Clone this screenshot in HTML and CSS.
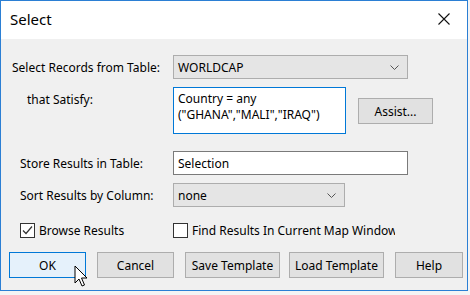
FILE: index.html
```html
<!DOCTYPE html>
<html lang="en">
<head>
    <meta charset="UTF-8">
    <title>Select</title>
    <link rel="stylesheet" href="styles.css">
</head>
<body>
    <div class="window">
        <div class="titlebar">
            <span class="title">Select</span>
            <svg class="close" width="12" height="12" viewBox="0 0 12 12">
                <path d="M0.5 0.5 L11.5 11.5 M11.5 0.5 L0.5 11.5" stroke="#111" stroke-width="1.1" fill="none"/>
            </svg>
        </div>
        <div class="content">
            <div class="row row-table">
                <label class="label l1">Select Records from Table:</label>
                <div class="combo wide">
                    <span>WORLDCAP</span>
                    <svg class="chev" width="9" height="5" viewBox="0 0 9 5"><path d="M0.5 0.5 L4.5 4.5 L8.5 0.5" stroke="#555" fill="none"/></svg>
                </div>
            </div>
            <div class="row row-where">
                <label class="label l2">that Satisfy:</label>
                <div class="textarea">Country = any<br>("GHANA","MALI","IRAQ")</div>
                <button class="btn assist">Assist...</button>
            </div>
            <div class="row row-store">
                <label class="label l3">Store Results in Table:</label>
                <div class="textbox">Selection</div>
            </div>
            <div class="row row-sort">
                <label class="label l3">Sort Results by Column:</label>
                <div class="combo narrow">
                    <span>none</span>
                    <svg class="chev" width="9" height="5" viewBox="0 0 9 5"><path d="M0.5 0.5 L4.5 4.5 L8.5 0.5" stroke="#555" fill="none"/></svg>
                </div>
            </div>
            <div class="row row-checks">
                <div class="check c1">
                    <span class="box">
                        <svg width="13" height="13" viewBox="0 0 13 13"><path d="M2 6.5 L5 9.5 L11 2.5" stroke="#333" stroke-width="1.2" fill="none"/></svg>
                    </span>
                    <span>Browse Results</span>
                </div>
                <div class="check c2">
                    <span class="box"></span>
                    <span class="clip">Find Results In Current Map Window</span>
                </div>
            </div>
            <div class="row buttons">
                <button class="btn ok">OK</button>
                <button class="btn cancel">Cancel</button>
                <button class="btn save">Save Template</button>
                <button class="btn load">Load Template</button>
                <button class="btn help">Help</button>
            </div>
        </div>
        <svg class="cursor" width="14" height="24" viewBox="0 0 14 24">
            <path d="M1 1 L1 18 L5 14 L8 21 L10.5 20 L7.5 13 L13 13 Z" fill="#fff" stroke="#000" stroke-width="1" stroke-linejoin="miter"/>
        </svg>
    </div>
</body>
</html>
```

FILE: styles.css
```css
body {
    margin: 0;
    background: #f4f4f4;
    font-family: "Noto Sans", "Open Sans", sans-serif;
    font-size: 12px;
    color: #000;
}
.window {
    position: relative;
    width: 466px;
    height: 289px;
    border: 1px solid #2b7fd4;
    background: #f0f0f0;
}
.titlebar {
    height: 38px;
    background: #fff;
    display: flex;
    align-items: center;
    justify-content: space-between;
    padding: 0 17px 0 9px;
}
.title {
    font-size: 15px;
    margin-top: -2px;
}
.close {
    margin-top: -2px;
}
.content {
    padding-top: 16px;
}
.row {
    display: flex;
    align-items: center;
}
.label {
    width: 172px;
    box-sizing: border-box;
}
.l1 { padding-left: 11px; }
.l2 { padding-left: 26px; }
.l3 { padding-left: 19px; }
.combo {
    height: 24px;
    box-sizing: border-box;
    border: 1px solid #adadad;
    background: #e5e5e5;
    display: flex;
    align-items: center;
    justify-content: space-between;
    padding: 0 8px 0 4px;
}
.combo.wide { width: 235px; }
.combo.narrow { width: 172px; }
.row-where {
    margin-top: 8px;
    align-items: flex-start;
}
.row-where .label {
    padding-top: 4px;
}
.textarea {
    width: 173px;
    height: 47px;
    box-sizing: border-box;
    border: 1px solid #0078d7;
    background: #fff;
    padding: 3px 4px;
    line-height: 16px;
}
.btn {
    font-family: inherit;
    font-size: 12px;
    height: 26px;
    box-sizing: border-box;
    border: 1px solid #adadad;
    background: #e1e1e1;
    color: #000;
    padding: 0;
}
.assist {
    width: 75px;
    margin: 11px 0 0 12px;
}
.row-store {
    margin-top: 17px;
}
.textbox {
    width: 235px;
    height: 24px;
    box-sizing: border-box;
    border: 1px solid #7a7a7a;
    background: #fff;
    padding: 0 4px;
    display: flex;
    align-items: center;
}
.row-sort {
    margin-top: 8px;
}
.row-checks {
    margin-top: 15px;
}
.check {
    display: flex;
    align-items: center;
    gap: 4px;
}
.c1 {
    width: 153px;
    margin-left: 19px;
}
.c2 {
    width: 222px;
    overflow: hidden;
    white-space: nowrap;
}
.box {
    width: 13px;
    height: 13px;
    border: 1px solid #333;
    background: #fff;
    flex: none;
    display: flex;
}
.buttons {
    margin-top: 13px;
    padding-left: 8px;
    gap: 0;
}
.ok {
    width: 77px;
    background: #e5f1fb;
    border-color: #0078d7;
}
.cancel {
    width: 77px;
    margin-left: 11px;
}
.save {
    width: 95px;
    margin-left: 11px;
}
.load {
    width: 95px;
    margin-left: 9px;
}
.help {
    width: 68px;
    margin-left: 11px;
}
.cursor {
    position: absolute;
    left: 73px;
    top: 264px;
}
```
